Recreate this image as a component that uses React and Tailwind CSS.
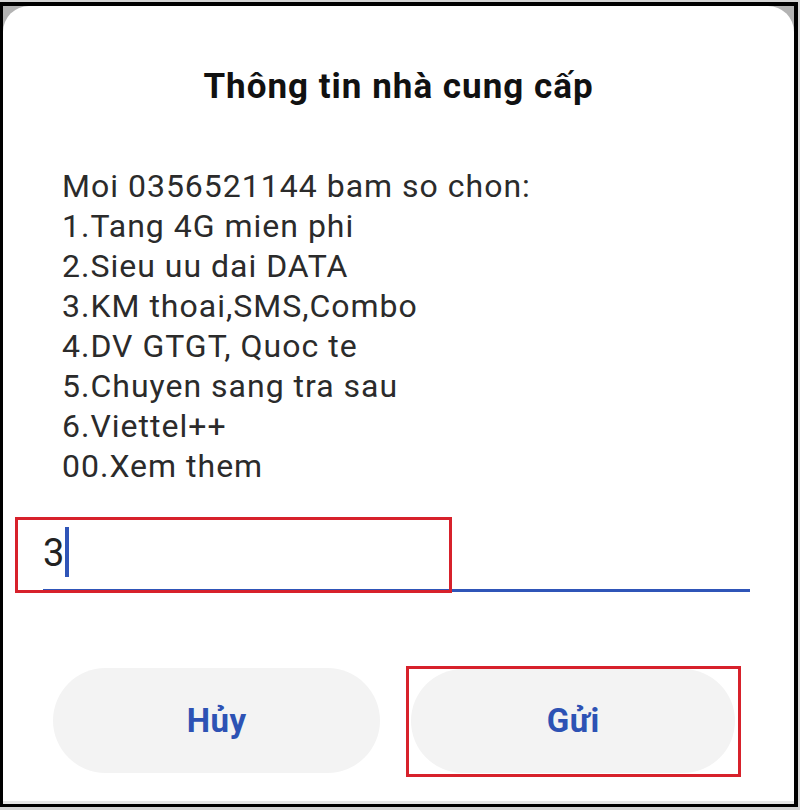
import React from "react";

const menu = [
  "Moi 0356521144 bam so chon:",
  "1.Tang 4G mien phi",
  "2.Sieu uu dai DATA",
  "3.KM thoai,SMS,Combo",
  "4.DV GTGT, Quoc te",
  "5.Chuyen sang tra sau",
  "6.Viettel++",
  "00.Xem them",
];

const App = () => {
  return (
    <div className="w-[800px] h-[810px] bg-[#d4d4d4] pt-[2px] pr-[2px] font-['Roboto',sans-serif]">
      <div className="h-[805px] border-t-[4px] border-l-[3px] border-r-[4px] border-b-[3px] border-black bg-[#b3b3b3] flex flex-col">
        <div className="flex-1 bg-white rounded-t-[26px] flex flex-col relative">
          <h1 className="text-center text-[35px] leading-[40px] tracking-[1px] font-bold text-[#111] mt-[61px]">
            Thông tin nhà cung cấp
          </h1>

          <div className="mt-[59px] pl-[59px] text-[32px] leading-[40px] tracking-[1px] text-[#2b2b2b]">
            {menu.map((line) => (
              <p key={line}>{line}</p>
            ))}
          </div>

          <div className="mt-[29px] ml-[40px] mr-[44px] h-[77px] border-b-[3px] border-[#2f55b8] flex items-center">
            <span className="text-[38px] leading-none text-[#222] mt-[2px]">3</span>
            <span className="w-[4px] h-[50px] bg-[#2f55b8] ml-[1px]"></span>
          </div>

          <div className="mt-[76px] flex gap-[31px] pl-[50px] pr-[59px]">
            <button className="w-[329px] h-[105px] rounded-full bg-[#f3f3f3] text-[33px] tracking-[0.5px] font-bold text-[#2d52b4]">
              Hủy
            </button>
            <button className="w-[325px] h-[104px] mt-[1px] rounded-full bg-[#f3f3f3] text-[33px] tracking-[0.5px] font-bold text-[#2d52b4]">
              Gửi
            </button>
          </div>

          <div className="flex-1"></div>
          <div className="h-[3px] bg-[#e6e6e6]"></div>

          {/* highlight boxes */}
          <div className="absolute left-[12px] top-[511px] w-[437px] h-[76px] border-[3px] border-[#d7212b]"></div>
          <div className="absolute left-[403px] top-[660px] w-[335px] h-[111px] border-[3px] border-[#d7212b]"></div>
        </div>
      </div>
    </div>
  );
};

export default App;
